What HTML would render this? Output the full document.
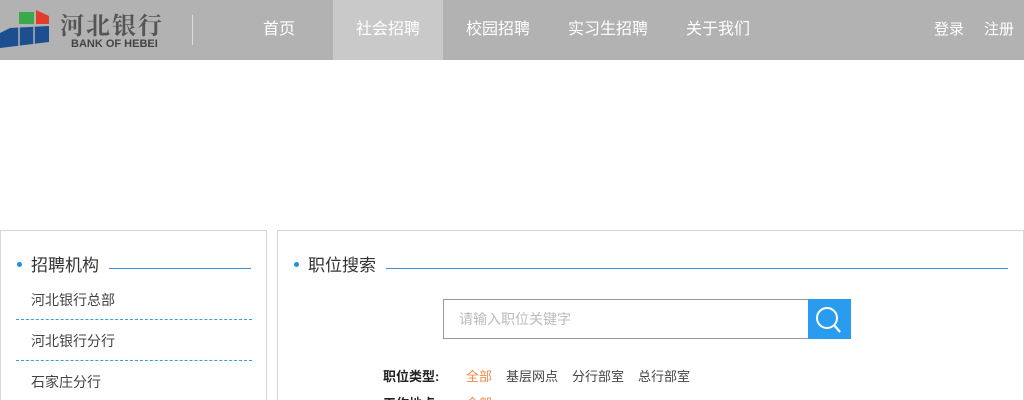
<!DOCTYPE html>
<html><head><meta charset="utf-8"><style>
*{margin:0;padding:0;box-sizing:border-box}
html,body{width:1024px;height:400px;overflow:hidden}
body{background:#fff;font-family:"Liberation Sans","Noto Sans CJK SC",sans-serif;position:relative}
.hd{position:absolute;left:0;top:0;width:1024px;height:60px;background:#b2b2b2}
.nav{position:absolute;top:0;height:60px;line-height:60px;color:#fff;font-size:16px;text-align:center}
.a{position:absolute;color:#fff;font-size:15px;top:0;line-height:60px}
.box{position:absolute;border:1px solid #d6d6d6;top:230px;height:180px}
.t{position:absolute;font-size:17px;color:#333}
.dot{position:absolute;width:5px;height:5px;border-radius:50%;background:#1e90e0}
.item{position:absolute;left:30px;font-size:14px;color:#444}
.dash{position:absolute;left:15px;width:236px;border-top:1px dashed #3a9fd8}
.s{position:absolute;font-size:13px;color:#444;top:366px}
</style></head><body>
<div class="hd">
<svg style="position:absolute;left:0;top:8px" width="52" height="42" viewBox="0 0 52 42">
<polygon points="19,4 34,4 34,16 19,16" fill="#3aa84b"/>
<polygon points="36,2 49,8 49,16 36,16" fill="#e23d2b"/>
<polygon points="0,25 10,20 49,18 49,34 0,40" fill="#1b4f8f"/>
<line x1="19" y1="19" x2="19" y2="38" stroke="#b2b2b2" stroke-width="1.5"/>
<line x1="34" y1="18" x2="34" y2="37" stroke="#b2b2b2" stroke-width="1.5"/>
</svg>
<div style="position:absolute;left:60px;top:10px;font-size:24px;font-weight:bold;color:#555;letter-spacing:2px;font-family:'Noto Serif CJK SC',serif;line-height:28px">河北银行</div>
<div style="position:absolute;left:71px;top:38px;font-size:11px;color:#444;line-height:12px;font-weight:bold">BANK OF HEBEI</div>
<div style="position:absolute;left:192px;top:15px;width:1px;height:30px;background:#ddd"></div>
<div class="nav" style="left:224px;width:110px">首页</div>
<div class="nav" style="left:333px;width:110px;background:#c9c9c9">社会招聘</div>
<div class="nav" style="left:443px;width:110px">校园招聘</div>
<div class="nav" style="left:553px;width:110px">实习生招聘</div>
<div class="nav" style="left:663px;width:110px">关于我们</div>
<div class="a" style="left:934px">登录</div>
<div class="a" style="left:984px">注册</div>
</div>
<div class="box" style="left:0;width:267px">
<div class="dot" style="left:16px;top:31px"></div>
<div class="t" style="left:30px;top:20px">招聘机构</div>
<div style="position:absolute;left:108px;top:37px;width:142px;height:1px;background:#3a8fd8"></div>
<div class="item" style="top:59px">河北银行总部</div>
<div class="dash" style="top:88px"></div>
<div class="item" style="top:100px">河北银行分行</div>
<div class="dash" style="top:129px"></div>
<div class="item" style="top:141px">石家庄分行</div>
</div>
<div class="box" style="left:277px;width:747px">
<div class="dot" style="left:16px;top:31px"></div>
<div class="t" style="left:30px;top:20px">职位搜索</div>
<div style="position:absolute;left:108px;top:37px;width:622px;height:1px;background:#3a8fd8"></div>
</div>
<div style="position:absolute;left:443px;top:299px;width:366px;height:40px;border:1px solid #999;font-size:14px;color:#bbb;line-height:38px;padding-left:15px">请输入职位关键字</div>
<div style="position:absolute;left:808px;top:299px;width:43px;height:40px;background:#2a9cf0">
<svg width="43" height="40" viewBox="0 0 43 40"><circle cx="19" cy="19" r="10" fill="none" stroke="#fff" stroke-width="2"/><line x1="26" y1="26" x2="32" y2="33" stroke="#fff" stroke-width="2.2"/></svg></div>
<div class="s" style="left:383px;font-weight:bold;color:#222">职位类型:</div>
<div class="s" style="left:466px;color:#f08a4b">全部</div>
<div class="s" style="left:506px">基层网点</div>
<div class="s" style="left:572px">分行部室</div>
<div class="s" style="left:638px">总行部室</div>
<div class="s" style="left:383px;top:393px;font-weight:bold;color:#222">工作地点:</div>
<div class="s" style="left:466px;top:393px;color:#f08a4b">全部</div>
</body></html>
